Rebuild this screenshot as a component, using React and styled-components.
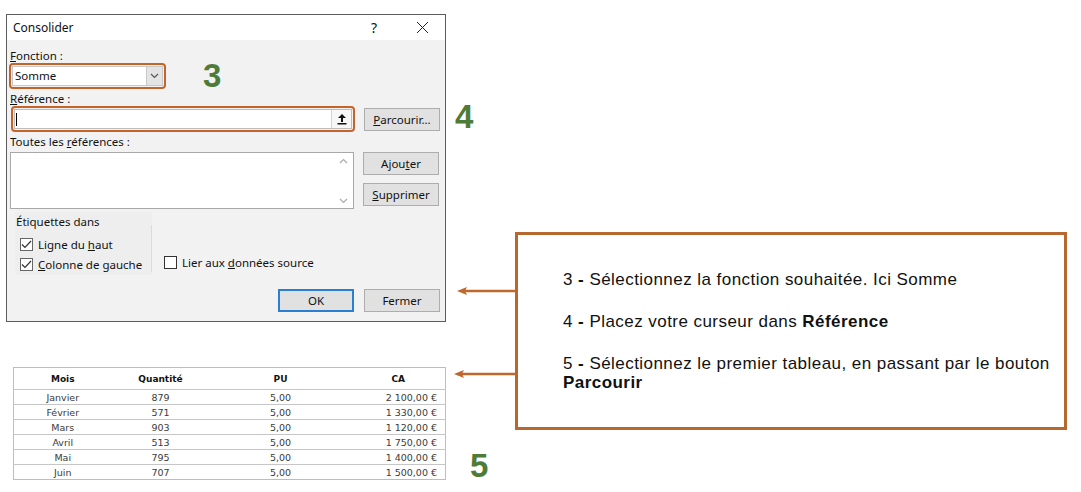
import React from "react"
import styled, { createGlobalStyle } from "styled-components"

const GlobalStyle = createGlobalStyle`
  * { box-sizing: border-box; }
  body {
    margin: 0;
    background: #fff;
    font-family: "Noto Sans", "Liberation Sans", sans-serif;
  }
`

const Page = styled.div`
  display: flex;
  align-items: flex-start;
  width: 1081px;
  height: 492px;
  overflow: hidden;
`

const LeftCol = styled.div`
  width: 515px;
  padding: 14px 0 0 6px;
  display: flex;
  flex-direction: column;
`

const DialogRow = styled.div`
  display: flex;
  align-items: flex-start;
`

const StepNum = styled.span`
  font-family: "Liberation Sans", Arial, sans-serif;
  font-weight: bold;
  font-size: 33px;
  line-height: 26px;
  color: #4f7b38;
  margin-top: ${({ top }) => top || 0}px;
  margin-left: ${({ left }) => left || 0}px;
`

const Dialog = styled.div`
  width: 440px;
  height: 308px;
  border: 1px solid #5c5c5c;
  background: #f2f2f2;
  display: flex;
  flex-direction: column;
  font-size: 11.5px;
  color: #111;
`

const TitleBar = styled.div`
  height: 25px;
  background: #fff;
  display: flex;
  align-items: center;
  padding-left: 6px;
  font-size: 12px;
  .title { flex: 1; }
  .help {
    width: 14px;
    text-align: center;
    font-size: 14px;
    margin-right: 35px;
  }
  .close {
    width: 14px;
    margin-right: 15px;
    display: flex;
  }
`

const Body = styled.div`
  flex: 1;
  padding: 9px 5px 9px 2px;
  display: flex;
  flex-direction: column;
`

const Label = styled.div`
  height: 14px;
  line-height: 14px;
  margin-top: ${({ gap }) => gap || 0}px;
  padding-left: 1px;
  white-space: nowrap;
`

const Row = styled.div`
  display: flex;
  align-items: flex-start;
  margin-top: ${({ gap }) => gap || 0}px;
`

const Highlight = styled.div`
  width: ${({ w }) => w}px;
  height: 26px;
  margin-left: ${({ left }) => left || 0}px;
  border: 2px solid #c5642a;
  border-radius: 4px;
  padding: 1px;
  display: flex;
`

const SelectBox = styled.div`
  flex: 1;
  display: flex;
  background: #fff;
  border: 1px solid #c9c9c9;
  .value {
    flex: 1;
    padding-left: 2px;
    line-height: 18px;
  }
  .arrow {
    width: 16px;
    background: #e4e4e4;
    border-left: 1px solid #c9c9c9;
    display: flex;
    align-items: center;
    justify-content: center;
  }
`

const RefInput = styled.div`
  flex: 1;
  display: flex;
  background: #fff;
  border: 1px solid #bdbdbd;
  .field {
    flex: 1;
    display: flex;
    align-items: center;
    padding-left: 1px;
  }
  .caret {
    width: 1px;
    height: 13px;
    background: #000;
  }
  .pick {
    width: 20px;
    display: flex;
    align-items: center;
    justify-content: center;
    background: #f7f7f7;
    border-left: 1px solid #d5d5d5;
  }
`

const Button = styled.div`
  width: 76px;
  height: 23px;
  margin-left: ${({ left }) => left || 0}px;
  margin-top: ${({ top }) => top || 0}px;
  background: #e1e1e1;
  border: ${({ primary }) => (primary ? "2px solid #2a7fd1" : "1px solid #adadad")};
  display: flex;
  align-items: center;
  justify-content: center;
  font-size: 11.5px;
`

const ListBox = styled.div`
  width: 344px;
  height: 57px;
  margin-left: 1px;
  background: #fff;
  border: 1px solid #a8a8a8;
  display: flex;
  justify-content: flex-end;
  .scroll {
    width: 16px;
    display: flex;
    flex-direction: column;
    justify-content: space-between;
    align-items: center;
    padding: 5px 0 4px;
    margin-right: 2px;
  }
`

const ButtonCol = styled.div`
  display: flex;
  flex-direction: column;
  gap: 8px;
  margin-left: 9px;
`

const OptionsRow = styled.div`
  display: flex;
  align-items: flex-end;
  margin-top: 3px;
`

const Group = styled.div`
  width: 137px;
  height: 63px;
  margin-left: 6px;
  background: #eeeeee;
  padding: 2px 0 0 1px;
  position: relative;
  .caption { margin-bottom: 5px; }
  &::after {
    content: "";
    position: absolute;
    right: 0;
    top: 13px;
    bottom: 3px;
    width: 1px;
    background: #dcdcdc;
  }
`

const Check = styled.label`
  display: flex;
  align-items: center;
  height: 20px;
  padding-left: ${({ indent }) => indent || 0}px;
  margin-bottom: ${({ bottom }) => bottom || 0}px;
  white-space: nowrap;
  .box {
    width: 13px;
    height: 13px;
    border: 1px solid ${({ checked }) => (checked ? "#666" : "#333")};
    background: #fff;
    margin-right: 5px;
    display: flex;
    align-items: center;
    justify-content: center;
  }
`

const Footer = styled.div`
  display: flex;
  justify-content: flex-end;
  gap: 10px;
  margin-top: 14px;
`

const TableRow = styled.div`
  display: flex;
  align-items: flex-end;
  margin-top: 45px;
  padding-left: 7px;
`

const Table = styled.table`
  width: 433px;
  border-collapse: collapse;
  border: 1px solid #bdbdbd;
  font-family: "DejaVu Sans", sans-serif;
  font-size: 9.5px;
  color: #3a3a3a;
  th {
    height: 22px;
    font-size: 9px;
    font-weight: bold;
    color: #111;
    text-align: center;
  }
  td {
    height: 15px;
    padding: 0;
    text-align: center;
    border-top: 1px solid #c6c6c6;
  }
  td.money { text-align: right; padding-right: 8px; }
`

const NoteBox = styled.div`
  position: relative;
  margin-top: 232px;
  width: 552px;
  height: 198px;
  border: 3px solid #b8672e;
  padding: 35px 0 0 45px;
  font-family: "Liberation Sans", Arial, sans-serif;
  font-size: 17px;
  letter-spacing: 0.45px;
  line-height: 19px;
  color: #111;
  p {
    margin: 0 0 23px;
    white-space: nowrap;
  }
`

const Arrow = styled.svg`
  position: absolute;
  left: ${({ left }) => left}px;
  top: ${({ top }) => top}px;
`

const ChevronDown = ({ color = "#555" }) => (
  <svg width="9" height="6" viewBox="0 0 9 6">
    <path d="M1 1 L4.5 4.5 L8 1" fill="none" stroke={color} strokeWidth="1.2" />
  </svg>
)

const ChevronUp = ({ color = "#aaa" }) => (
  <svg width="9" height="6" viewBox="0 0 9 6">
    <path d="M1 5 L4.5 1.5 L8 5" fill="none" stroke={color} strokeWidth="1.2" />
  </svg>
)

const Tick = () => (
  <svg width="11" height="9" viewBox="0 0 11 9">
    <path d="M1 4.5 L4 7.5 L10 1" fill="none" stroke="#333" strokeWidth="1.2" />
  </svg>
)

const rows = [
  ["Janvier", "879", "5,00", "2 100,00 €"],
  ["Février", "571", "5,00", "1 330,00 €"],
  ["Mars", "903", "5,00", "1 120,00 €"],
  ["Avril", "513", "5,00", "1 750,00 €"],
  ["Mai", "795", "5,00", "1 400,00 €"],
  ["Juin", "707", "5,00", "1 500,00 €"],
]

const ArrowLeft = ({ left, top, width }) => (
  <Arrow left={left} top={top} width={width} height="10" viewBox={`0 0 ${width} 10`}>
    <line x1="6" y1="5" x2={width} y2="5" stroke="#c0672c" strokeWidth="2.5" />
    <path d="M0 5 L10 1 L8 5 L10 9 Z" fill="#c0672c" />
  </Arrow>
)

export default function App() {
  return (
    <>
      <GlobalStyle />
      <Page>
        <LeftCol>
          <DialogRow>
            <Dialog>
              <TitleBar>
                <span className="title">Consolider</span>
                <span className="help">?</span>
                <span className="close">
                  <svg width="13" height="13" viewBox="0 0 13 13">
                    <path d="M1 1 L12 12 M12 1 L1 12" stroke="#222" strokeWidth="1" />
                  </svg>
                </span>
              </TitleBar>
              <Body>
                <Label><u>F</u>onction :</Label>
                <Row>
                  <Highlight w={157}>
                    <SelectBox>
                      <span className="value">Somme</span>
                      <span className="arrow"><ChevronDown /></span>
                    </SelectBox>
                  </Highlight>
                  <StepNum left={37}>3</StepNum>
                </Row>
                <Label gap={3}><u>R</u>éférence :</Label>
                <Row>
                  <Highlight w={344} left={2}>
                    <RefInput>
                      <span className="field"><span className="caret" /></span>
                      <span className="pick">
                        <svg width="10" height="12" viewBox="0 0 10 12">
                          <path d="M5 1 L9 5 L6 5 L6 9 L4 9 L4 5 L1 5 Z" fill="#111" />
                          <rect x="0.5" y="10" width="9" height="1.5" fill="#111" />
                        </svg>
                      </span>
                    </RefInput>
                  </Highlight>
                  <Button left={9} top={2}><span><u>P</u>arcourir...</span></Button>
                </Row>
                <Label gap={3}>Toutes les <u>r</u>éférences :</Label>
                <Row gap={3}>
                  <ListBox>
                    <span className="scroll">
                      <ChevronUp />
                      <ChevronDown color="#aaa" />
                    </span>
                  </ListBox>
                  <ButtonCol>
                    <Button><span>Ajou<u>t</u>er</span></Button>
                    <Button><span><u>S</u>upprimer</span></Button>
                  </ButtonCol>
                </Row>
                <OptionsRow>
                  <Group>
                    <div className="caption">Étiquettes dans</div>
                    <Check checked indent={4}>
                      <span className="box"><Tick /></span>
                      <span>Ligne du <u>h</u>aut</span>
                    </Check>
                    <Check checked indent={4}>
                      <span className="box"><Tick /></span>
                      <span><u>C</u>olonne de gauche</span>
                    </Check>
                  </Group>
                  <Check indent={12} bottom={3}>
                    <span className="box" />
                    <span>Lier aux <u>d</u>onnées source</span>
                  </Check>
                </OptionsRow>
                <Footer>
                  <Button primary>OK</Button>
                  <Button>Fermer</Button>
                </Footer>
              </Body>
            </Dialog>
            <StepNum top={90} left={9}>4</StepNum>
          </DialogRow>
          <TableRow>
            <Table>
              <thead>
                <tr>
                  <th style={{ width: 98 }}>Mois</th>
                  <th style={{ width: 98 }}>Quantité</th>
                  <th style={{ width: 142 }}>PU</th>
                  <th>CA</th>
                </tr>
              </thead>
              <tbody>
                {rows.map(r => (
                  <tr key={r[0]}>
                    <td>{r[0]}</td>
                    <td>{r[1]}</td>
                    <td>{r[2]}</td>
                    <td className="money">{r[3]}</td>
                  </tr>
                ))}
              </tbody>
            </Table>
            <StepNum left={24} style={{ marginBottom: 1 }}>5</StepNum>
          </TableRow>
        </LeftCol>
        <NoteBox>
          <ArrowLeft left={-61} top={51} width={59} />
          <ArrowLeft left={-64} top={134} width={62} />
          <p>3 <b>-</b> Sélectionnez la fonction souhaitée. Ici Somme</p>
          <p>4 <b>-</b> Placez votre curseur dans <b>Référence</b></p>
          <p>
            5 <b>-</b> Sélectionnez le premier tableau, en passant par le bouton
            <br />
            <b>Parcourir</b>
          </p>
        </NoteBox>
      </Page>
    </>
  )
}
